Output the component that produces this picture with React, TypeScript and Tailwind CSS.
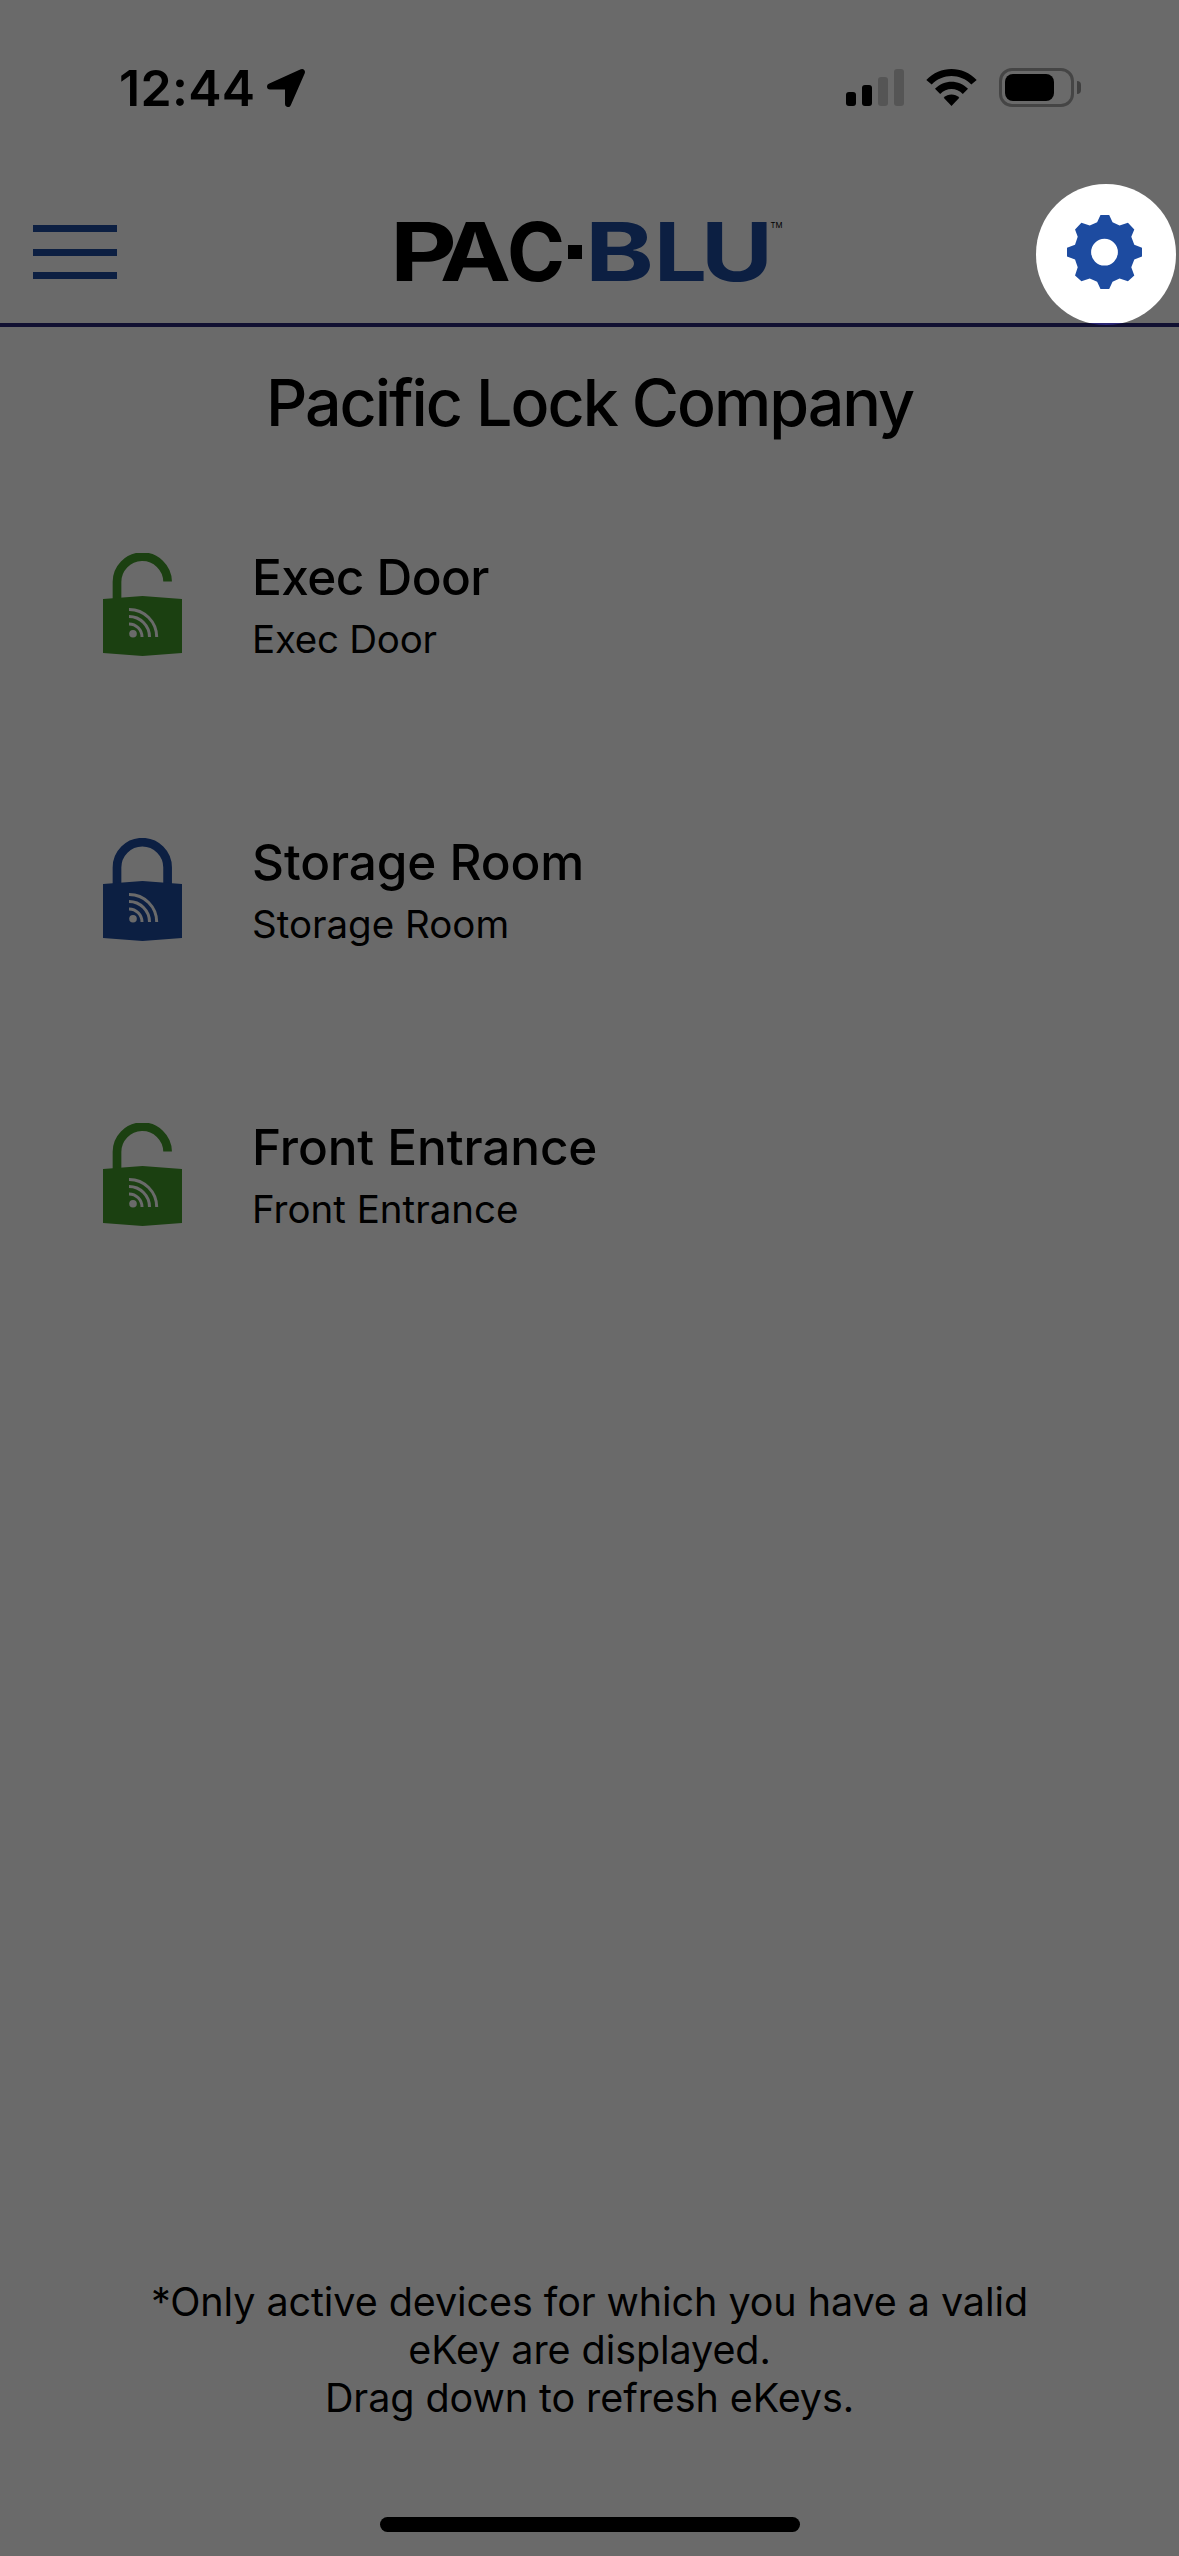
import React from 'react';

const devices = [
  { name: 'Exec Door', location: 'Exec Door', locked: false, nameClass: 'tracking-[-0.55px]', locationClass: 'tracking-[-0.25px]' },
  { name: 'Storage Room', location: 'Storage Room', locked: true, nameClass: 'tracking-[-0.1px]', locationClass: 'tracking-[0px]' },
  { name: 'Front Entrance', location: 'Front Entrance', locked: false, nameClass: 'tracking-[-0.1px]', locationClass: 'tracking-[0px]' },
];

function LockIcon({ locked }: { locked: boolean }) {
  return (
    <svg viewBox="0 0 79 103" className={`h-[103px] w-[79px] shrink-0 ${locked ? 'text-[#1d4ba0]' : 'text-[#429a2b]'}`} fill="none">
      <path
        d={locked ? 'M14 48V29.5a25.3 25.3 0 0 1 50.6 0V48' : 'M14 48V29.5a25.3 25.3 0 0 1 50.6-1'}
        stroke="currentColor"
        strokeWidth="8.7"
      />
      <path d="M0 46L39.5 43L79 46V100L39.5 103L0 100Z" fill="currentColor" />
      <circle cx="30" cy="80.7" r="3.8" fill="#fff" />
      <path
        d="M26 56.5A27.5 27.5 0 0 1 53.7 84M26 63.5A20.5 20.5 0 0 1 46.5 84M26 71A13 13 0 0 1 39 84"
        stroke="#fff"
        strokeWidth="3"
      />
    </svg>
  );
}

function GearIcon() {
  return (
    <svg viewBox="171 136 224 221" className="h-[74px] w-[75px]">
      <path
        fill="#1d4ba0"
        fillRule="evenodd"
        d="M271 136H297L307 158L328 167L353 159L372 179L363 201L372 225L395 234V260L372 269L363 292L372 317L353 334L328 326L307 335L297 357H271L261 335L239 326L214 334L195 317L203 292L195 269L171 260V234L195 225L203 201L195 179L214 159L239 167L261 158ZM283 207a40 40 0 1 0 0 80a40 40 0 1 0 0-80Z"
      />
    </svg>
  );
}

function Logo() {
  return (
    <svg viewBox="-10 -20 400 110" className="h-[110px] w-[400px]" fontFamily="Inter, sans-serif" fontWeight="700" fontSize="81">
      <g fill="#000">
        <text x="-6" y="64" textLength="67" lengthAdjust="spacingAndGlyphs">P</text>
        <text x="44" y="64" textLength="71" lengthAdjust="spacingAndGlyphs">A</text>
        <text x="111" y="64" textLength="58" lengthAdjust="spacingAndGlyphs">C</text>
        <rect x="172" y="28" width="14" height="14" />
      </g>
      <g fill="#1d4ba0">
        <text x="189" y="64" textLength="69" lengthAdjust="spacingAndGlyphs">B</text>
        <text x="258" y="64" textLength="53" lengthAdjust="spacingAndGlyphs">L</text>
        <text x="305" y="64" textLength="72" lengthAdjust="spacingAndGlyphs">U</text>
      </g>
      <text x="374.5" y="11" fontSize="8" fontWeight="400" fill="#000" textLength="12" lengthAdjust="spacingAndGlyphs">TM</text>
    </svg>
  );
}

function StatusBar() {
  return (
    <div className="flex h-[176px] items-start justify-between pt-[68px] pl-[119px] pr-[98px]">
      <div className="flex items-start">
        <span className="w-[147px] text-[50px] leading-[40px] font-semibold tracking-[0.3px]">12:44</span>
        <svg viewBox="0 0 40 40" className="h-10 w-10">
          <path d="M4 18.5L36 4L22 36V18.5Z" stroke="#000" strokeWidth="6" strokeLinejoin="round" />
        </svg>
      </div>
      <div className="flex items-start">
        <div className="flex h-[38px] items-end gap-1.5">
          <div className="h-[14px] w-[10px] rounded-[3px] bg-black" />
          <div className="h-[21px] w-[10px] rounded-[3px] bg-black" />
          <div className="h-[29px] w-[10px] rounded-[3px] bg-black/20" />
          <div className="h-[37px] w-[10px] rounded-[3px] bg-black/20" />
        </div>
        <svg viewBox="0 0 51 38" className="ml-[22px] h-[38px] w-[51px]">
          <path d="M0.3 12C14-2.8 37-2.8 50.7 12L45.3 16.6C34.5 5.2 16.5 5.2 5.7 16.6Z" />
          <path d="M9 20.8C18 11.4 33 11.4 42 20.8L36.8 26C30.5 19.2 20.5 19.2 14.2 26Z" />
          <path d="M17.7 29.8C22 25.4 29 25.4 33.3 29.8L25.5 38Z" />
        </svg>
        <div className="ml-[22px] flex items-center gap-[3px]">
          <div className="h-[39px] w-[75px] rounded-[13px] border-3 border-black/35 p-[3px]">
            <div className="h-[27px] w-[49px] rounded-[8px] bg-black" />
          </div>
          <div className="h-[13px] w-[4px] rounded-r-full bg-black/40" />
        </div>
      </div>
    </div>
  );
}

export default function App() {
  return (
    <div className="relative flex h-[2556px] w-[1179px] flex-col overflow-hidden bg-white font-['Inter',sans-serif] text-black">
      <StatusBar />

      {/* Header */}
      <header className="flex h-[151px] items-start justify-between border-b-4 border-[#2b2778] pr-[37px] pl-[33px]">
        <div className="mt-[49px] flex w-[84px] flex-col gap-[16.5px]">
          <div className="h-[7px] bg-[#1d4ba0]" />
          <div className="h-[7px] bg-[#1d4ba0]" />
          <div className="h-[7px] bg-[#1d4ba0]" />
        </div>
        <div className="mt-[21px] ml-[-12px]">
          <Logo />
        </div>
        <div className="relative mt-[39px]">
          <GearIcon />
          {/* Spotlight around the settings button, everything else is dimmed */}
          <div className="absolute -top-[31px] -left-[31px] z-10 h-[141px] w-[140px] rounded-full shadow-[0_0_0_3000px_rgba(0,0,0,0.585)]" />
        </div>
      </header>

      <h1 className="h-[135px] pt-9 text-center text-[64.5px] leading-[80px] font-medium tracking-[-2.05px]">
        Pacific Lock Company
      </h1>

      {/* Device list */}
      <ul>
        {devices.map((device) => (
          <li key={device.name} className="flex h-[285px] items-center gap-[70px] pl-[103px]">
            <LockIcon locked={device.locked} />
            <div className="pt-[9px]">
              <p className={`text-[49.5px] leading-[60px] font-medium ${device.nameClass}`}>{device.name}</p>
              <p className={`text-[38.5px] leading-[64px] ${device.locationClass}`}>{device.location}</p>
            </div>
          </li>
        ))}
      </ul>

      <div className="mt-auto flex flex-col items-center pb-6">
        <p className="text-center text-[39.5px] leading-[48px] tracking-[-0.08px]">
          *Only active devices for which you have a valid
          <br />
          eKey are displayed.
          <br />
          Drag down to refresh eKeys.
        </p>
        <div className="mt-[95px] h-[15px] w-[420px] rounded-full bg-black" />
      </div>
    </div>
  );
}
